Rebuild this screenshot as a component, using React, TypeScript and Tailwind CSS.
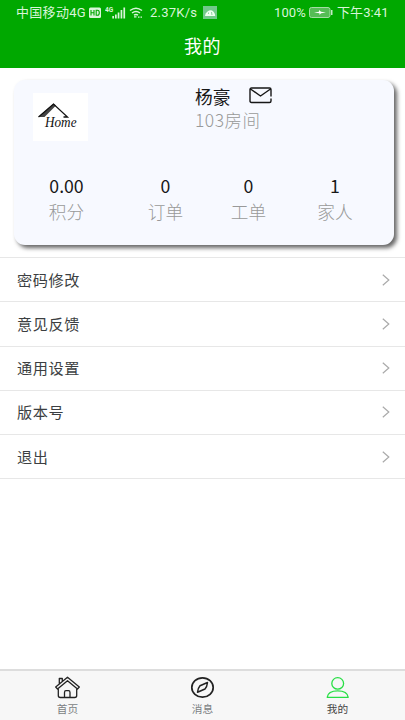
import React from "react";

const stats = [
  { value: "0.00", label: "积分", box: "w-[105px]" },
  { value: "0", label: "订单", box: "w-[93px]" },
  { value: "0", label: "工单", box: "w-[73px]" },
  { value: "1", label: "家人", box: "w-[100px]" },
];

const rows = ["密码修改", "意见反馈", "通用设置", "版本号", "退出"];

function StatusBar() {
  return (
    <div className="flex h-[25px] items-center pl-[16px] font-['Roboto','Noto_Sans_CJK_SC',sans-serif] text-[13px] leading-[25px] text-[#d9f5d9]">
      <span className="w-[73px] shrink-0 whitespace-nowrap tracking-[0.3px]">中国移动4G</span>
      <svg className="h-[12px] w-[12px] shrink-0" viewBox="0 0 12 12">
        <rect y=".5" width="12" height="10.500" rx="1.500" fill="#d9f5d9" />
        <path d="M2 3v5.500M5 3v5.500M2 5.700h3M7.200 3.200h1.300q1.800 0 1.800 2.500T8.500 8.300H7.200z" fill="none" stroke="#00a800" strokeWidth="1.100" />
      </svg>
      <svg className="ml-[4px] h-[14px] w-[22px] shrink-0" viewBox="0 0 22 14" fill="#d9f5d9">
        <text x="0" y="6" fontSize="6.500" fontWeight="bold">4G</text>
        <path d="M7.3 10h1.7v2.5H7.3zM10 8.500h1.700v4H10zM12.700 6.500h1.700v6h-1.700zM15.600 4h1.700v8.500h-1.700zM18.400 1.500h1.700v11h-1.700z" />
      </svg>
      <svg className="ml-[2px] h-[13px] w-[14px] shrink-0" viewBox="0 0 14 13" fill="none" stroke="#d9f5d9" strokeWidth="1.500">
        <path d="M1 4.500Q7-.2 13 4.500M3 7q4-3 8 0M5 9.200q2-1.400 4 0" />
        <path d="M5 10.800h2.500M9 11.200h1.500M11.500 11.200h1.500" strokeWidth="1.200" />
      </svg>
      <span className="ml-[7px] w-[53px] shrink-0 whitespace-nowrap tracking-[0.25px]">2.37K/s</span>
      <svg className="h-[13px] w-[14px] shrink-0" viewBox="0 0 14 13">
        <path d="M0 0h14v13H0z" fill="#72c98b" />
        <path d="M2 10q0-3 2.500-4.500Q7 3.500 9 4.500q3 1.500 3.200 5.500z" fill="#effff0" />
        <path d="M5.500 8V6.500M9 9l-.5-3" stroke="#72c98b" strokeWidth=".8" />
      </svg>
      <span className="ml-[57px] w-[35px] shrink-0 tracking-[0.1px]">100%</span>
      <svg className="h-[11px] w-[24px] shrink-0" viewBox="0 0 24 11">
        <rect x=".5" y=".5" width="20.500" height="10" rx="2" fill="#55bd55" stroke="#a5dca5" />
        <path d="M22 3h1.500v5H22z" fill="#c5eac5" />
        <path d="M5 5.500l5-.7V3l2 1.800 5 .7-5 .8-1.500 1.700V6.300z" fill="#fff" />
      </svg>
      <span className="ml-[4px] shrink-0 whitespace-nowrap tracking-[0.1px]">下午3:41</span>
    </div>
  );
}

function HomeLogo() {
  return (
    <svg className="ml-[19px] mt-[13px] h-[48px] w-[55px] shrink-0" viewBox="0 0 55 48">
      <path d="M0 0h55v48H0z" fill="#fff" />
      <path d="M5.500 24L20.500 10.500l2.500 2L11.500 24z" fill="#444" />
      <path d="M5.500 24L20.500 11 34.500 24H30.500" fill="none" stroke="#111" strokeWidth="1.300" />
      <text x="12" y="34" fontFamily="Liberation Serif, serif" fontStyle="italic" fontSize="14" textLength="31.500" lengthAdjust="spacingAndGlyphs" fill="#111">Home</text>
    </svg>
  );
}

function ProfileCard() {
  return (
    <section className="mx-[14px] mt-[12px] h-[165px] w-[380px] rounded-[11px] bg-[#f7f9ff] shadow-[3px_3px_4px_0px_#666666]">
      <div className="flex h-[90px]">
        <HomeLogo />
        <div className="ml-[107px] pt-[4px]">
          <div className="flex h-[24px] items-center text-[17.700px] leading-[24px] text-[#171717]">
            <span>杨豪</span>
            <svg className="ml-[19px] h-[17px] w-[23px] -translate-y-px" viewBox="0 0 23 17" fill="none" stroke="#171717" strokeWidth="1.400" strokeLinejoin="round">
              <path d="M22 11.500V14q0 1.500-1.500 1.500h-18Q1 15.500 1 14V2.500Q1 1 2.500 1h18Q22 1 22 2.500V9.500M1.500 2l10 7 10-7" />
            </svg>
          </div>
          <div className="h-[24px] text-[17.500px] leading-[23px] font-light tracking-[0.500px] text-[#999999]">103房间</div>
        </div>
      </div>
      <div className="flex pt-[2px]">
        {stats.map((item) => (
          <div key={item.label} className={`${item.box} flex shrink-0 flex-col items-center`}>
            <span className="h-[26px] text-[17.700px] leading-[26px] text-[#171717]">{item.value}</span>
            <span className="h-[26px] text-[17.700px] leading-[26px] font-light text-[#999999]">{item.label}</span>
          </div>
        ))}
      </div>
    </section>
  );
}

function MenuRow({ label }: { label: string }) {
  return (
    <div className="flex h-[44.250px] items-center border-b border-[#e7e7e7] pl-[17px] pr-[15px] text-[15.200px] text-[#3c3f42]">
      <span className="pb-px tracking-[0.600px]">{label}</span>
      <svg className="ml-auto h-[12px] w-[8px]" viewBox="0 0 8 12" fill="none" stroke="#aaaaaa" strokeWidth="1.200">
        <path d="M.8.800L6.800 6 .8 11.200" />
      </svg>
    </div>
  );
}

function HouseIcon() {
  return (
    <svg className="h-[24px] w-[26px]" viewBox="0 0 26 24" fill="none" stroke="#222" strokeWidth="1.300" strokeLinejoin="round">
      <path d="M4.300 7.500V2.500h3v2.500M.7 11L12.500 1.200 24.300 11l-1.800 2L12.500 4.700 2.500 13zM3.300 13v6.500q0 2 2 2h14.400q2 0 2-2V13M9.500 21.500v-5q0-1.800 1.500-1.800h2.500q1.500 0 1.500 1.800v5" />
    </svg>
  );
}

function CompassIcon() {
  return (
    <svg className="h-[24px] w-[26px]" viewBox="0 0 26 24" fill="none" stroke="#222" strokeWidth="1.700" strokeLinejoin="round">
      <ellipse cx="12.500" cy="11.500" rx="10.700" ry="9.700" />
      <path d="M17.500 6.500Q17 11 15 13l-7.500 3.300Q8 12 10 9.800z" strokeWidth="1.500" />
    </svg>
  );
}

function PersonIcon() {
  return (
    <svg className="h-[24px] w-[26px]" viewBox="0 0 26 24" fill="none" stroke="#28df45" strokeWidth="1.300" strokeLinejoin="round">
      <ellipse cx="12.700" cy="7.400" rx="5.900" ry="5.700" />
      <path d="M2.200 21.300q.8-6.500 10.500-6.500t10.500 6.500z" />
    </svg>
  );
}

export default function App() {
  return (
    <main className="flex h-[720px] w-[405px] flex-col overflow-hidden bg-white font-['Noto_Sans_CJK_SC',sans-serif]">
      <header className="h-[68px] shrink-0 bg-[#00a800]">
        <StatusBar />
        <h1 className="text-center text-[18px] leading-[41px] tracking-[0.500px] text-white">我的</h1>
      </header>
      <ProfileCard />
      <div className="mt-[12px] border-t border-[#e7e7e7]">
        {rows.map((label) => <MenuRow key={label} label={label} />)}
      </div>
      <nav className="mt-auto grid h-[51px] shrink-0 grid-cols-3 border-t-2 border-[#dddddd] bg-[#f7f7f7] text-[10.700px] text-[#7b7f83]">
        <div className="flex flex-col items-center pt-[5px]"><HouseIcon /><span className="leading-[17px]">首页</span></div>
        <div className="flex flex-col items-center pt-[5px]"><CompassIcon /><span className="leading-[17px]">消息</span></div>
        <div className="flex flex-col items-center pt-[5px] text-[#444]"><PersonIcon /><span className="leading-[17px]">我的</span></div>
      </nav>
    </main>
  );
}
